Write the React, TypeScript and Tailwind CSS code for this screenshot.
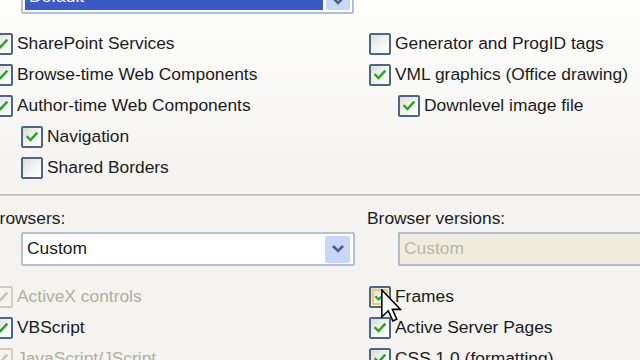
import React from 'react';

interface BoxProps {
  checked?: boolean;
  disabled?: boolean;
  hover?: boolean;
}

const CheckBox = ({ checked, disabled, hover }: BoxProps) => {
  const border = disabled ? 'border-[#cdcbc0]' : 'border-[#4a6886]';
  const fill = disabled
    ? 'bg-[#f4f3ee]'
    : 'bg-gradient-to-br from-[#dcdcd6] via-[#f2f2ef] to-white';
  return (
    <div className={`shrink-0 w-[22px] h-[22px] border-2 rounded-[2px] ${border} ${fill} flex items-center justify-center`}>
      <div className={`w-[16px] h-[16px] flex items-center justify-center ${hover ? 'border-2 border-[#f2c866] rounded-[1px]' : ''}`}>
        {checked && (
          <svg width="14" height="14" viewBox="0 0 14 14">
            <path
              d="M2.5 7 L5.5 10 L11.5 3.5"
              fill="none"
              stroke={disabled ? '#c4c2b6' : '#27a327'}
              strokeWidth="2.4"
              strokeLinecap="square"
            />
          </svg>
        )}
      </div>
    </div>
  );
};

interface RowProps extends BoxProps {
  label: string;
  indent?: string;
}

const Row = ({ label, indent = '', checked, disabled, hover }: RowProps) => (
  <div className={`flex items-center h-[31px] gap-[4px] ${indent}`}>
    <CheckBox checked={checked} disabled={disabled} hover={hover} />
    <span className={`whitespace-nowrap ${disabled ? 'text-[#b1aea3]' : 'text-[#1b1b1b]'}`}>
      {label}
    </span>
  </div>
);

const Chevron = () => (
  <svg width="14" height="10" viewBox="0 0 14 10">
    <path d="M2 2 L7 7 L12 2" fill="none" stroke="#4b5f86" strokeWidth="2.6" />
  </svg>
);

export default function App() {
  return (
    <div className="relative w-[640px] h-[360px] overflow-hidden bg-gradient-to-b from-[#fdfdfc] via-[#f4f3ef] to-[#f4f3ef] font-['Liberation_Sans',Arial,sans-serif] text-[17.4px] leading-none">
      {/* combo at top */}
      <div className="ml-[21px] -mt-[20px] w-[333px] h-[34px] border-2 border-[#aebfd9] rounded-[2px] bg-white flex p-[2px] gap-[3px]">
        <div className="flex-1 bg-[#3a5ac4] text-white flex items-center px-[4px]">Default</div>
        <div className="w-[24px] bg-[#c8d6f7] rounded-[2px] flex items-end justify-center pb-[4px]">
          <Chevron />
        </div>
      </div>

      <div className="grid grid-cols-[368px_1fr] mt-[14px]">
        <div className="flex flex-col -ml-[9px]">
          <Row label="SharePoint Services" checked />
          <Row label="Browse-time Web Components" checked />
          <Row label="Author-time Web Components" checked />
          <Row label="Navigation" checked indent="ml-[30px]" />
          <Row label="Shared Borders" indent="ml-[30px]" />
        </div>
        <div className="flex flex-col ml-[1px]">
          <Row label="Generator and ProgID tags" />
          <Row label="VML graphics (Office drawing)" checked />
          <Row label="Downlevel image file" checked indent="ml-[29px]" />
        </div>
      </div>

      <div className="mt-[11px] h-[2px] bg-[#c4c3bd]" />
      <div className="h-[1px] bg-white" />

      <div className="grid grid-cols-[368px_1fr] mt-[11px]">
        <div className="flex flex-col">
          <div className="h-[22px] flex items-center -ml-[12px] text-[#1b1b1b]">Browsers:</div>
          <div className="mt-[2px] ml-[21px] w-[334px] h-[34px] border-2 border-[#b4c2d8] rounded-[2px] bg-white flex items-center pl-[4px] pr-[3px]">
            <span className="flex-1 text-[#1b1b1b]">Custom</span>
            <div className="w-[25px] h-[27px] bg-[#c8d6f7] rounded-[2px] flex items-center justify-center">
              <Chevron />
            </div>
          </div>
        </div>
        <div className="flex flex-col">
          <div className="h-[22px] flex items-center -ml-[1px] text-[#1b1b1b]">Browser versions:</div>
          <div className="mt-[2px] ml-[30px] w-[260px] h-[34px] border-2 border-r-0 border-[#b3bccb] rounded-l-[2px] bg-[#efebdd] flex items-center pl-[4px] text-[#bab5a6]">
            Custom
          </div>
        </div>
      </div>

      <div className="grid grid-cols-[368px_1fr] mt-[15px]">
        <div className="flex flex-col -ml-[9px]">
          <Row label="ActiveX controls" checked disabled />
          <Row label="VBScript" checked />
          <Row label="JavaScript/JScript" checked disabled />
        </div>
        <div className="flex flex-col ml-[1px]">
          <Row label="Frames" checked hover />
          <Row label="Active Server Pages" checked />
          <Row label="CSS 1.0 (formatting)" checked />
        </div>
      </div>

      {/* mouse pointer */}
      <svg className="absolute left-[381px] top-[289px]" width="22" height="34" viewBox="0 0 13 20">
        <path
          d="M0.5 0.5 L0.5 16.5 L4.3 12.8 L7 18.8 L9.3 17.8 L6.7 12 L11.5 12 Z"
          fill="white"
          stroke="black"
          strokeWidth="0.9"
          strokeLinejoin="miter"
        />
      </svg>
    </div>
  );
}
